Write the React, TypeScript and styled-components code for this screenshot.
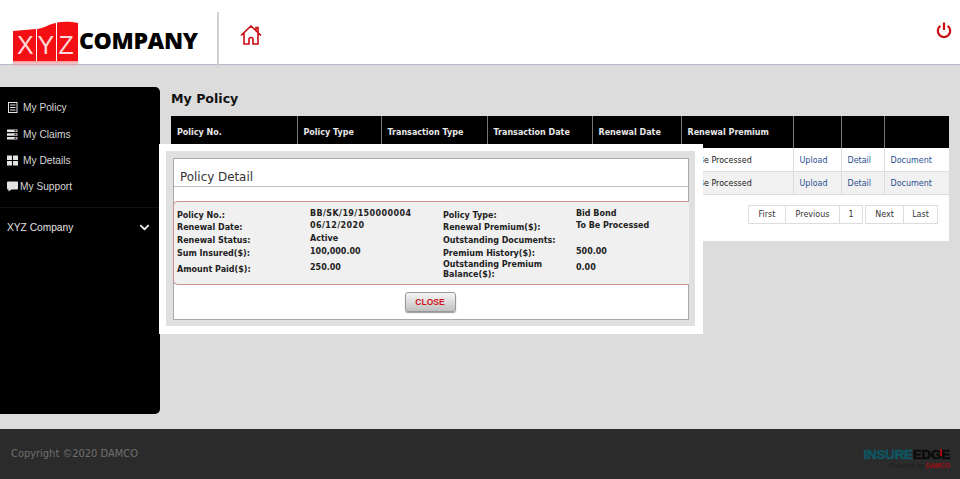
import React from 'react';
import styled, { createGlobalStyle } from 'styled-components';
import { FaChevronDown } from 'react-icons/fa';

const GlobalStyle = createGlobalStyle`
  html, body {
    margin: 0;
    padding: 0;
    height: 100%;
    overflow: hidden;
    background: #dcdcdc;
  }
  * {
    box-sizing: border-box;
  }
`;

const Page = styled.div`
  position: relative;
  display: flex;
  flex-direction: column;
  width: 960px;
  height: 479px;
  background: #dcdcdc;
  font-family: 'DejaVu Sans', Verdana, sans-serif;
`;

const Header = styled.header`
  display: flex;
  align-items: flex-start;
  height: 65px;
  background: #fff;
  border-bottom: 1px solid #b4bccb;
`;

const LogoWrap = styled.div`
  display: flex;
  align-items: flex-end;
  width: 217px;
  height: 64px;
  padding: 0 0 0 13px;
`;

const LogoMark = styled.svg`
  display: block;
  width: 66px;
  height: 49px;
  margin-bottom: -3px;
  flex: none;
`;

const CompanyName = styled.span`
  margin: 0 0 12px 0;
  font-family: 'Open Sans', sans-serif;
  font-size: 23px;
  font-weight: 800;
  line-height: 24px;
  letter-spacing: -0.35px;
  color: #000;
`;

const Divider = styled.div`
  width: 2px;
  height: 56px;
  margin-top: 12px;
  background: #d0d0d0;
`;

const HomeLink = styled.a`
  display: block;
  width: 22px;
  height: 20px;
  margin: 25px 0 0 21px;
  color: #cc0b12;
`;

const PowerLink = styled.a`
  display: block;
  width: 16px;
  height: 18px;
  margin: 22px 8px 0 auto;
  color: #cc0b12;
`;

const Main = styled.main`
  display: flex;
  flex: 1;
  align-items: flex-start;
  padding-top: 22px;
`;

const Sidebar = styled.nav`
  width: 160px;
  height: 327px;
  padding-top: 7.5px;
  background: #000;
  border-radius: 0 5px 5px 0;
  font-family: 'Liberation Sans', Arial, sans-serif;
  font-size: 10.2px;
  color: #d6d6d6;
`;

const MenuList = styled.ul`
  margin: 0;
  padding: 0 0 7px;
  list-style: none;
  border-bottom: 1px solid #111;
`;

const MenuItem = styled.li`
  display: flex;
  align-items: center;
  height: 26.4px;
  padding-left: 7px;
`;

const MenuIcon = styled.svg<{ $gap: number }>`
  display: block;
  width: 11px;
  height: 11px;
  flex: none;
  margin-right: ${(p) => p.$gap}px;
  color: #e4e4e4;
`;

const CompanyRow = styled.div`
  display: flex;
  align-items: center;
  justify-content: space-between;
  height: 26px;
  margin-top: 6.5px;
  padding: 0 10px 0 7px;
  color: #e0e0e0;
`;

const Content = styled.section`
  width: 778px;
  margin-left: 11px;
`;

const Title = styled.h1`
  margin: 0;
  height: 29px;
  padding-top: 4px;
  font-size: 12.6px;
  line-height: 16px;
  font-weight: 700;
  color: #111;
`;

const TableCard = styled.div`
  height: 125px;
  background: #fff;
`;

const Table = styled.table`
  width: 778px;
  border-collapse: collapse;
  table-layout: fixed;
  font-size: 8px;
`;

const HeadCell = styled.th`
  height: 32px;
  padding: 0 6px;
  background: #000;
  color: #e8e8e8;
  font-weight: 700;
  text-align: left;
  border-right: 1px solid #777;
  &:last-child {
    border-right: 0;
  }
`;

const Row = styled.tr<{ $alt?: boolean }>`
  background: ${(p) => (p.$alt ? '#f1f1f1' : '#fff')};
`;

const Cell = styled.td`
  height: 23px;
  padding: 2px 6px 0;
  color: #222;
  white-space: nowrap;
  border-right: 1px solid #ddd;
  border-bottom: 1px solid #ddd;
  &:last-child {
    border-right: 0;
  }
`;

const TableLink = styled.a`
  color: #2a4f8f;
`;

const Pager = styled.div`
  display: flex;
  margin: 10px 11px 0 0;
  justify-content: flex-end;
`;

const PageButton = styled.span<{ $w: number; $gap?: boolean }>`
  display: flex;
  align-items: center;
  justify-content: center;
  width: ${(p) => p.$w}px;
  height: 19px;
  margin-left: ${(p) => (p.$gap ? 2 : 0)}px;
  font-size: 8px;
  color: #333;
  background: #fff;
  border: 1px solid #ddd;
  border-left-width: ${(p) => (p.$gap ? 1 : 0)}px;
`;

const Footer = styled.footer`
  display: flex;
  align-items: flex-start;
  justify-content: space-between;
  height: 50px;
  background: #2b2b2b;
  padding: 18px 10px 0 11px;
`;

const Copyright = styled.span`
  font-size: 9.9px;
  line-height: 13px;
  color: #6f6f6f;
`;

const FooterBrand = styled.div`
  display: flex;
  flex-direction: column;
  align-items: flex-end;
  margin-top: 1px;
  font-family: 'Liberation Sans', Arial, sans-serif;
`;

const BrandName = styled.div`
  font-size: 13.4px;
  line-height: 13px;
  font-weight: 700;
  letter-spacing: -0.2px;
  -webkit-text-stroke: 0.6px currentColor;
  color: #0f5560;
`;

const BrandEdge = styled.span`
  position: relative;
  color: #0b0b0b;
`;

const BrandTick = styled.i`
  position: absolute;
  right: 8px;
  top: 2px;
  width: 2px;
  height: 7px;
  background: #a30d12;
`;

const BrandSub = styled.div`
  font-size: 6.5px;
  line-height: 9px;
  color: #1c1c1c;
`;

const BrandRed = styled.span`
  font-weight: 700;
  color: #a00c12;
`;

const ModalFrame = styled.div`
  position: absolute;
  left: 159px;
  top: 144px;
  width: 544px;
  height: 190px;
  padding: 7px 8px 8px 7px;
  background: #fff;
`;

const ModalShade = styled.div`
  height: 100%;
  padding: 7px 6px 6px 7px;
  background: #e0e0e0;
`;

const ModalPanel = styled.div`
  display: flex;
  flex-direction: column;
  height: 100%;
  background: #fff;
  border: 1px solid #a8a8a8;
`;

const ModalHead = styled.div`
  height: 28px;
  padding: 10px 0 0 6px;
  font-size: 11.9px;
  line-height: 16px;
  color: #333;
  border-bottom: 1px solid #c0c0c0;
`;

const DetailBox = styled.div`
  position: relative;
  display: grid;
  grid-template-columns: 133px 133px 133px 1fr;
  grid-auto-rows: 12.7px;
  height: 84px;
  margin: 14px -1px 0;
  padding: 7px 0 0 3px;
  background: #f0f0f0;
  border-top: 1px solid #d08f8f;
  border-bottom: 1px solid #d08f8f;
  border-left: 1px solid #d08f8f;
  border-radius: 5px 0 0 5px;
  font-size: 8px;
  font-weight: 700;
  color: #222;
`;

const DetailLabel = styled.div<{ $tall?: boolean }>`
  display: flex;
  align-items: center;
  height: ${(p) => (p.$tall ? 20 : 13)}px;
  line-height: 9.5px;
`;

const DetailValue = styled.div<{ $tall?: boolean; $spaced?: boolean }>`
  display: flex;
  align-items: center;
  height: ${(p) => (p.$tall ? 18 : 13)}px;
  margin-top: ${(p) => (p.$tall ? -1 : -2)}px;
  line-height: 9.5px;
  letter-spacing: ${(p) => (p.$spaced ? 0.4 : 0)}px;
`;

const ModalActions = styled.div`
  display: flex;
  justify-content: center;
  padding: 7px 2px 0 0;
`;

const CloseButton = styled.button`
  width: 51px;
  height: 20px;
  padding: 0;
  font-family: 'Liberation Sans', Arial, sans-serif;
  font-size: 8.5px;
  font-weight: 700;
  color: #d0101a;
  background: linear-gradient(#f6f6f6, #c0c0c0);
  border: 1px solid #999;
  border-radius: 3px;
  box-shadow: 0 1px 1px #999;
`;

const columns = [
  { label: 'Policy No.', w: 126 },
  { label: 'Policy Type', w: 84 },
  { label: 'Transaction Type', w: 106 },
  { label: 'Transaction Date', w: 105 },
  { label: 'Renewal Date', w: 89 },
  { label: 'Renewal Premium', w: 112 },
  { label: '', w: 48 },
  { label: '', w: 43 },
  { label: '', w: 65 },
];

const details = [
  ['Policy No.:', 'BB/SK/19/150000004', 'Policy Type:', 'Bid Bond'],
  ['Renewal Date:', '06/12/2020', 'Renewal Premium($):', 'To Be Processed'],
  ['Renewal Status:', 'Active', 'Outstanding Documents:', ''],
  ['Sum Insured($):', '100,000.00', 'Premium History($):', '500.00'],
  ['Amount Paid($):', '250.00', 'Outstanding Premium Balance($):', '0.00'],
];

function Logo() {
  return (
    <LogoMark viewBox="0 0 66 49">
      <defs>
        <linearGradient id="logoShine" x1="0" y1="0" x2="0" y2="1">
          <stop offset="0" stopColor="#f59a9a" />
          <stop offset="1" stopColor="#f59a9a" stopOpacity="0" />
        </linearGradient>
      </defs>
      <path d="M0 13 L23 11 L23 43 L0 43 Z" fill="#f40f14" />
      <path d="M24 11 C32 10 36 6 43 5 L43 43 L24 43 Z" fill="#f40f14" />
      <path d="M44 4.5 C50 3.5 58 3.5 65 5 L65 43 L44 43 Z" fill="#f40f14" />
      <rect x="0" y="43" width="65" height="6" fill="url(#logoShine)" />
      <g fontFamily="'Liberation Sans', sans-serif" fontSize="25" fontWeight="300" fill="#ffd9d9">
        <text x="4" y="36">X</text>
        <text x="24.5" y="36">Y</text>
        <text x="45.5" y="36">Z</text>
      </g>
    </LogoMark>
  );
}

function HomeIcon() {
  return (
    <svg viewBox="0 0 22 20" width="22" height="20" fill="none" stroke="currentColor" strokeWidth="1.6">
      <path d="M1 10.5 L11 1 L21 10.5 M4 8 V19 H9 V14.5 A2 2 0 0 1 13 14.5 V19 H18 V8 M16 5 V2.5 H18 V7" />
    </svg>
  );
}

function PowerIcon() {
  return (
    <svg viewBox="0 0 16 18" width="16" height="18" fill="none" stroke="currentColor" strokeWidth="2.2">
      <path d="M8 0.5 V8" />
      <path d="M4.4 3.8 A6.2 6.2 0 1 0 11.6 3.8" />
    </svg>
  );
}

function PolicyIcon() {
  return (
    <MenuIcon $gap={5} viewBox="0 0 11 11" fill="none" stroke="currentColor">
      <rect x="1.5" y="0.5" width="8.5" height="10" />
      <path d="M3 3 H8.5 M3 5.5 H8.5 M3 8 H8.5" strokeWidth="1.2" />
    </MenuIcon>
  );
}

function ClaimsIcon() {
  return (
    <MenuIcon $gap={5} viewBox="0 0 11 11" fill="currentColor">
      <path d="M0 0.5 H10.5 V3 H0 Z M0 4.2 H10.5 V6.7 H0 Z M0 8 H10.5 V10.5 H0 Z" />
      <path d="M7.5 1 H9.5 V2.4 H7.5 Z M7.5 4.8 H9.5 V6.2 H7.5 Z M7.5 8.6 H9.5 V10 H7.5 Z" fill="#333" />
    </MenuIcon>
  );
}

function DetailsIcon() {
  return (
    <MenuIcon $gap={5} viewBox="0 0 11 11" fill="currentColor">
      <path d="M0 0.5 H5 V5 H0 Z M6 0.5 H11 V5 H6 Z M0 6 H5 V10.5 H0 Z M6 6 H11 V10.5 H6 Z" />
    </MenuIcon>
  );
}

function SupportIcon() {
  return (
    <MenuIcon $gap={2} viewBox="0 0 11 11" fill="currentColor">
      <path d="M1 0.5 H10 A1 1 0 0 1 11 1.5 V7.5 A1 1 0 0 1 10 8.5 H4.5 L1.5 10.5 V8.5 H1 A1 1 0 0 1 0 7.5 V1.5 A1 1 0 0 1 1 0.5 Z" />
    </MenuIcon>
  );
}

const menu = [
  { label: 'My Policy', Icon: PolicyIcon },
  { label: 'My Claims', Icon: ClaimsIcon },
  { label: 'My Details', Icon: DetailsIcon },
  { label: 'My Support', Icon: SupportIcon },
];

export default function App() {
  return (
    <Page>
      <GlobalStyle />
      <Header>
        <LogoWrap>
          <Logo />
          <CompanyName>COMPANY</CompanyName>
        </LogoWrap>
        <Divider />
        <HomeLink>
          <HomeIcon />
        </HomeLink>
        <PowerLink>
          <PowerIcon />
        </PowerLink>
      </Header>
      <Main>
        <Sidebar>
          <MenuList>
            {menu.map(({ label, Icon }) => (
              <MenuItem key={label}>
                <Icon />
                {label}
              </MenuItem>
            ))}
          </MenuList>
          <CompanyRow>
            XYZ Company
            <FaChevronDown size={11} color="#eee" />
          </CompanyRow>
        </Sidebar>
        <Content>
          <Title>My Policy</Title>
          <TableCard>
            <Table>
              <colgroup>
                {columns.map((c, i) => (
                  <col key={i} width={c.w} />
                ))}
              </colgroup>
              <thead>
                <tr>
                  {columns.map((c, i) => (
                    <HeadCell key={i}>{c.label}</HeadCell>
                  ))}
                </tr>
              </thead>
              <tbody>
                {[false, true].map((alt) => (
                  <Row key={String(alt)} $alt={alt}>
                    <Cell />
                    <Cell />
                    <Cell />
                    <Cell />
                    <Cell />
                    <Cell>To Be Processed</Cell>
                    <Cell>
                      <TableLink>Upload</TableLink>
                    </Cell>
                    <Cell>
                      <TableLink>Detail</TableLink>
                    </Cell>
                    <Cell>
                      <TableLink>Document</TableLink>
                    </Cell>
                  </Row>
                ))}
              </tbody>
            </Table>
            <Pager>
              <PageButton $w={38} $gap>First</PageButton>
              <PageButton $w={54}>Previous</PageButton>
              <PageButton $w={23}>1</PageButton>
              <PageButton $w={39} $gap>Next</PageButton>
              <PageButton $w={34}>Last</PageButton>
            </Pager>
          </TableCard>
        </Content>
      </Main>
      <Footer>
        <Copyright>Copyright ©2020 DAMCO</Copyright>
        <FooterBrand>
          <BrandName>
            INSURE
            <BrandEdge>
              EDGE
              <BrandTick />
            </BrandEdge>
          </BrandName>
          <BrandSub>
            Powered by <BrandRed>DAMCO</BrandRed>
          </BrandSub>
        </FooterBrand>
      </Footer>
      <ModalFrame>
        <ModalShade>
          <ModalPanel>
            <ModalHead>Policy Detail</ModalHead>
            <DetailBox>
              {details.map((row, i) => {
                const tall = i === 4;
                return (
                  <React.Fragment key={row[0]}>
                    <DetailLabel $tall={tall}>{row[0]}</DetailLabel>
                    <DetailValue $tall={tall} $spaced={row[1].includes('/')}>{row[1]}</DetailValue>
                    <DetailLabel $tall={tall}>{row[2]}</DetailLabel>
                    <DetailValue $tall={tall}>{row[3]}</DetailValue>
                  </React.Fragment>
                );
              })}
            </DetailBox>
            <ModalActions>
              <CloseButton>CLOSE</CloseButton>
            </ModalActions>
          </ModalPanel>
        </ModalShade>
      </ModalFrame>
    </Page>
  );
}
